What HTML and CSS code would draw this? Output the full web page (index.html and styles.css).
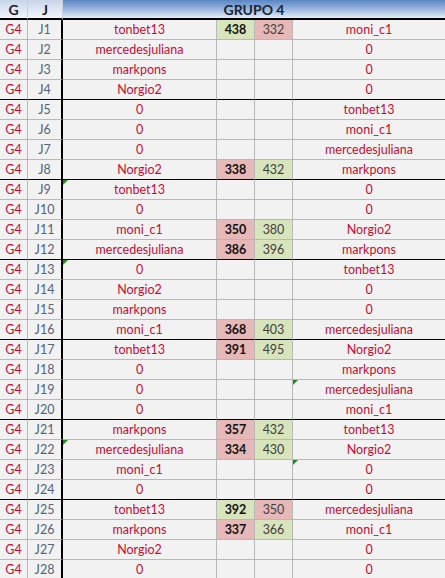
FILE: index.html
```html
<!DOCTYPE html>
<html>
<head>
<meta charset="utf-8">
<link rel="stylesheet" href="styles.css">
</head>
<body>
<div class="sheet">
  <div class="row head">
    <div class="c g hd">G</div>
    <div class="c j hd">J</div>
    <div class="c grupo">GRUPO 4</div>
  </div>

  <div class="row"><div class="c g">G4</div><div class="c j">J1</div><div class="c n">tonbet13</div><div class="c s b green">438</div><div class="c s pink">332</div><div class="c n">moni_c1</div></div>
  <div class="row"><div class="c g">G4</div><div class="c j">J2</div><div class="c n">mercedesjuliana</div><div class="c s"></div><div class="c s"></div><div class="c n">0</div></div>
  <div class="row"><div class="c g">G4</div><div class="c j">J3</div><div class="c n">markpons</div><div class="c s"></div><div class="c s"></div><div class="c n">0</div></div>
  <div class="row end"><div class="c g">G4</div><div class="c j">J4</div><div class="c n">Norgio2</div><div class="c s"></div><div class="c s"></div><div class="c n">0</div></div>

  <div class="row"><div class="c g">G4</div><div class="c j">J5</div><div class="c n">0</div><div class="c s"></div><div class="c s"></div><div class="c n">tonbet13</div></div>
  <div class="row"><div class="c g">G4</div><div class="c j">J6</div><div class="c n">0</div><div class="c s"></div><div class="c s"></div><div class="c n">moni_c1</div></div>
  <div class="row"><div class="c g">G4</div><div class="c j">J7</div><div class="c n">0</div><div class="c s"></div><div class="c s"></div><div class="c n">mercedesjuliana</div></div>
  <div class="row end"><div class="c g">G4</div><div class="c j">J8</div><div class="c n">Norgio2</div><div class="c s b pink">338</div><div class="c s green">432</div><div class="c n">markpons</div></div>

  <div class="row"><div class="c g">G4</div><div class="c j">J9</div><div class="c n note">tonbet13</div><div class="c s"></div><div class="c s"></div><div class="c n">0</div></div>
  <div class="row"><div class="c g">G4</div><div class="c j">J10</div><div class="c n">0</div><div class="c s"></div><div class="c s"></div><div class="c n">0</div></div>
  <div class="row"><div class="c g">G4</div><div class="c j">J11</div><div class="c n">moni_c1</div><div class="c s b pink">350</div><div class="c s green">380</div><div class="c n">Norgio2</div></div>
  <div class="row end"><div class="c g">G4</div><div class="c j">J12</div><div class="c n">mercedesjuliana</div><div class="c s b pink">386</div><div class="c s green">396</div><div class="c n">markpons</div></div>

  <div class="row"><div class="c g">G4</div><div class="c j">J13</div><div class="c n note">0</div><div class="c s"></div><div class="c s"></div><div class="c n">tonbet13</div></div>
  <div class="row"><div class="c g">G4</div><div class="c j">J14</div><div class="c n">Norgio2</div><div class="c s"></div><div class="c s"></div><div class="c n">0</div></div>
  <div class="row"><div class="c g">G4</div><div class="c j">J15</div><div class="c n">markpons</div><div class="c s"></div><div class="c s"></div><div class="c n">0</div></div>
  <div class="row end"><div class="c g">G4</div><div class="c j">J16</div><div class="c n">moni_c1</div><div class="c s b pink">368</div><div class="c s green">403</div><div class="c n">mercedesjuliana</div></div>

  <div class="row"><div class="c g">G4</div><div class="c j">J17</div><div class="c n">tonbet13</div><div class="c s b pink">391</div><div class="c s green">495</div><div class="c n">Norgio2</div></div>
  <div class="row"><div class="c g">G4</div><div class="c j">J18</div><div class="c n">0</div><div class="c s"></div><div class="c s"></div><div class="c n">markpons</div></div>
  <div class="row"><div class="c g">G4</div><div class="c j">J19</div><div class="c n">0</div><div class="c s"></div><div class="c s"></div><div class="c n note">mercedesjuliana</div></div>
  <div class="row end"><div class="c g">G4</div><div class="c j">J20</div><div class="c n">0</div><div class="c s"></div><div class="c s"></div><div class="c n">moni_c1</div></div>

  <div class="row"><div class="c g">G4</div><div class="c j">J21</div><div class="c n">markpons</div><div class="c s b pink">357</div><div class="c s green">432</div><div class="c n">tonbet13</div></div>
  <div class="row"><div class="c g">G4</div><div class="c j">J22</div><div class="c n note">mercedesjuliana</div><div class="c s b pink">334</div><div class="c s green">430</div><div class="c n">Norgio2</div></div>
  <div class="row"><div class="c g">G4</div><div class="c j">J23</div><div class="c n">moni_c1</div><div class="c s"></div><div class="c s"></div><div class="c n note">0</div></div>
  <div class="row end"><div class="c g">G4</div><div class="c j">J24</div><div class="c n">0</div><div class="c s"></div><div class="c s"></div><div class="c n">0</div></div>

  <div class="row"><div class="c g">G4</div><div class="c j">J25</div><div class="c n">tonbet13</div><div class="c s b green">392</div><div class="c s pink">350</div><div class="c n">mercedesjuliana</div></div>
  <div class="row"><div class="c g">G4</div><div class="c j">J26</div><div class="c n">markpons</div><div class="c s b pink">337</div><div class="c s green">366</div><div class="c n">moni_c1</div></div>
  <div class="row"><div class="c g">G4</div><div class="c j">J27</div><div class="c n">Norgio2</div><div class="c s"></div><div class="c s"></div><div class="c n">0</div></div>
  <div class="row"><div class="c g">G4</div><div class="c j">J28</div><div class="c n">0</div><div class="c s"></div><div class="c s"></div><div class="c n">0</div></div>
</div>
</body>
</html>
```

FILE: styles.css
```css
html, body {
  margin: 0;
  padding: 0;
  background: #f2f2f2;
}
.sheet {
  width: 445px;
  font-family: Lato, "Open Sans", sans-serif;
  font-size: 12.5px;
  color: #c80c32;
}
.row {
  display: grid;
  grid-template-columns: 28px 35px 154px 38px 38px 152px;
  height: 20px;
}
.c {
  position: relative;
  box-sizing: border-box;
  height: 20px;
  border-bottom: 1px solid #b8b8b8;
  border-right: 1px solid #b8b8b8;
  display: flex;
  align-items: center;
  justify-content: center;
  background: #f2f2f2;
  white-space: nowrap;
  padding-bottom: 1px;
}
.row.end .c {
  border-bottom-color: #000;
}
.c.j {
  border-right: 2px solid #000;
  color: #55627a;
}
.c:last-child {
  border-right: 0;
}
.c.s {
  color: #404040;
}
.c.b {
  font-weight: bold;
  color: #111;
}
.green { background: #d8e4bc; }
.pink { background: #e6b8b7; }

.head .c {
  border-bottom: 2px solid #000;
  color: #1b2430;
  font-weight: bold;
  font-size: 14px;
  padding-bottom: 0;
}
.head .hd {
  background: linear-gradient(#c8d6ea, #f3f6fb);
  border-right-color: #c9d2de;
}
.head .c.j {
  border-right: 1px solid #c9d2de;
}
.head .grupo {
  grid-column: 3 / 7;
  background: linear-gradient(#5a86c4, #9fbbe0 55%, #e6eef8);
  border-right: 0;
}
.note::before {
  content: "";
  position: absolute;
  left: 0;
  top: 0;
  width: 0;
  height: 0;
  border-top: 5px solid #1e8c1e;
  border-right: 5px solid transparent;
}
```
